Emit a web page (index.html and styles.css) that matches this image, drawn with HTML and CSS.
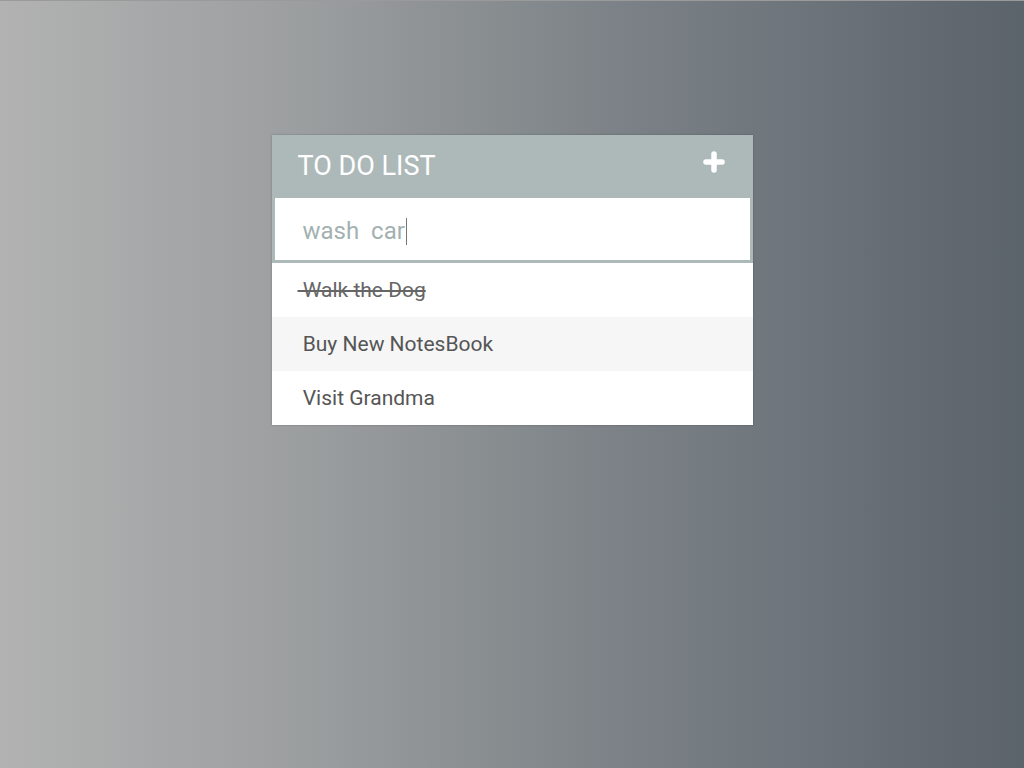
FILE: index.html
```html
<!DOCTYPE html>
<html>
<head>
<meta charset="utf-8">
<link rel="stylesheet" href="styles.css">
</head>
<body>
<div class="card">
  <div class="header">
    <h1 class="title">TO DO LIST</h1>
    <svg class="plus" width="22" height="22" viewBox="0 0 22 22"><path d="M11 3v16M3 11h16" stroke="#fff" stroke-width="5.5" stroke-linecap="round"/></svg>
  </div>
  <div class="entry"><span class="entry-text">wash&nbsp; car</span><span class="caret"></span></div>
  <ul class="list">
    <li class="item done">&nbsp;Walk the Dog</li>
    <li class="item alt">&nbsp;Buy New NotesBook</li>
    <li class="item">&nbsp;Visit Grandma</li>
  </ul>
</div>
</body>
</html>
```
FILE: styles.css
```css
html, body {
  margin: 0;
  height: 100%;
}
body {
  background: linear-gradient(to right, #b2b2b2 0%, #9b9e9f 30%, #7c8287 60%, #5b636b 100%);
  font-family: Roboto, "Liberation Sans", sans-serif;
  border-top: 1px solid #9a9a9a;
  box-sizing: border-box;
}
.card {
  width: 481px;
  margin: 134px auto 0;
  background: #fff;
  box-shadow: 0 0 2px rgba(0,0,0,0.25);
}
.header {
  height: 62px;
  background: #adb9b9;
  display: flex;
  align-items: center;
  justify-content: space-between;
  padding: 0 28px 0 26px;
}
.title {
  margin: 0;
  font-size: 27px;
  font-weight: 400;
  color: #fff;
}
.plus {
  margin-top: -8px;
}
.entry {
  height: 58px;
  padding-top: 4px;
  border: 3px solid #adb9b9;
  border-top: 1px solid #adb9b9;
  display: flex;
  align-items: center;
  padding-left: 28px;
  font-size: 24px;
  color: #a3b1b1;
}
.caret {
  width: 1px;
  height: 27px;
  background: #777;
  margin-left: 1px;
}
.list {
  list-style: none;
  margin: 0;
  padding: 0;
}
.item {
  height: 54px;
  display: flex;
  align-items: center;
  padding-left: 26px;
  font-size: 21px;
  color: #555;
}
.item.alt {
  background: #f6f6f6;
}
.item.done {
  text-decoration: line-through;
  color: #666;
}
```
